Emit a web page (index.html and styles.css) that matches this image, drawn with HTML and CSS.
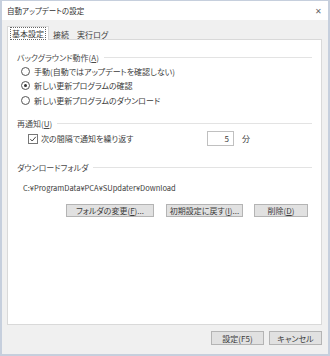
FILE: index.html
```html
<!DOCTYPE html>
<html lang="ja">
<head>
    <meta charset="UTF-8">
    <title>自動アップデートの設定</title>
    <link rel="stylesheet" href="styles.css">
</head>
<body>
<div class="window">
    <div class="titlebar">
        <span class="title">自動アップデートの設定</span>
        <span class="close">✕</span>
    </div>
    <div class="client">
        <div class="tabs">
            <span class="tab active"><span class="focus">基本設定</span></span>
            <span class="tab">接続</span>
            <span class="tab">実行ログ</span>
        </div>
        <div class="panel">
            <div class="group">
                <div class="legend"><span>バックグラウンド動作(<u>A</u>)</span></div>
                <label class="opt"><span class="radio"></span>手動(自動ではアップデートを確認しない)</label>
                <label class="opt"><span class="radio on"></span>新しい更新プログラムの確認</label>
                <label class="opt"><span class="radio"></span>新しい更新プログラムのダウンロード</label>
            </div>
            <div class="group g2">
                <div class="legend"><span>再通知(<u>U</u>)</span></div>
                <div class="row">
                    <span class="check">
                        <svg width="8" height="8" viewBox="0 0 8 8"><path d="M1.3 4.1 L3.2 6 L6.8 1.8" fill="none" stroke="#444" stroke-width="1"/></svg>
                    </span>
                    <span class="rowtext">次の間隔で通知を繰り返す</span>
                    <span class="num">5</span>
                    <span class="unit">分</span>
                </div>
            </div>
            <div class="group g3">
                <div class="legend"><span>ダウンロードフォルダ</span></div>
                <div class="path">C:¥ProgramData¥PCA¥SUpdater¥Download</div>
                <div class="btns">
                    <span class="btn b1">フォルダの変更(<u>F</u>)...</span>
                    <span class="btn b2">初期設定に戻す(<u>I</u>)...</span>
                    <span class="btn b3">削除(<u>D</u>)</span>
                </div>
            </div>
        </div>
        <div class="footer">
            <span class="btn fbtn">設定(F5)</span>
            <span class="btn fbtn">キャンセル</span>
        </div>
    </div>
</div>
</body>
</html>
```

FILE: styles.css
```css
html, body {
    margin: 0;
    padding: 0;
    background: #ffffff;
}

body {
    font-family: "Noto Sans CJK JP", "Noto Sans", sans-serif;
    font-size: 8px;
    font-feature-settings: "palt";
    color: #3c3c3c;
}

.window {
    width: 330px;
    height: 356px;
    box-sizing: border-box;
    border: 1px solid #c6cfdd;
    border-width: 1px 2px 2px 2px;
    display: flex;
    flex-direction: column;
}

.titlebar {
    height: 19px;
    background: #ffffff;
    display: flex;
    align-items: center;
    justify-content: space-between;
    padding: 0 6px 0 5px;
}

.title {
    font-size: 7.5px;
    color: #333;
}

.close {
    font-size: 8px;
    color: #666;
}

.client {
    flex: 1;
    background: #f0f0f0;
    padding: 0 6px 0 5px;
    display: flex;
    flex-direction: column;
}

.tabs {
    display: flex;
    align-items: flex-end;
    height: 20px;
    margin-bottom: -1px;
}

.tab {
    height: 11px;
    line-height: 11px;
    padding: 0 4px;
    white-space: nowrap;
}

.tab.active {
    height: 13px;
    line-height: 13px;
    background: #ffffff;
    border: 1px solid #d9d9d9;
    border-bottom: none;
    padding: 0 2px;
    position: relative;
    z-index: 1;
}

.focus {
    border: 1px dotted #666;
    padding: 0 1px;
}

.panel {
    height: 286px;
    box-sizing: border-box;
    background: #ffffff;
    border: 1px solid #d9d9d9;
    padding: 10px 9px 0 9px;
}

.legend {
    display: flex;
    align-items: center;
    height: 14px;
    color: #4a4a4a;
}

.legend::after {
    content: "";
    flex: 1;
    height: 1px;
    background: #e3e3e3;
    margin-left: 5px;
}

.opt {
    display: flex;
    align-items: center;
    height: 14.5px;
    padding-left: 4px;
}

.radio {
    width: 7px;
    height: 7px;
    border: 1px solid #555;
    border-radius: 50%;
    margin-right: 4px;
    position: relative;
    flex: none;
}

.radio.on::after {
    content: "";
    position: absolute;
    left: 2px;
    top: 2px;
    width: 3px;
    height: 3px;
    border-radius: 50%;
    background: #333;
}

.g2 {
    margin-top: 9px;
}

.row {
    display: flex;
    align-items: center;
    height: 16px;
    padding-left: 11px;
}

.check {
    width: 8px;
    height: 8px;
    border: 1px solid #777;
    display: flex;
    margin-right: 3px;
}

.num {
    margin-left: auto;
    width: 27px;
    height: 15px;
    box-sizing: border-box;
    border: 1px solid #c0c0c0;
    text-align: right;
    padding-right: 4px;
    line-height: 13px;
}

.unit {
    margin-left: 8px;
    margin-right: 62px;
}

.g3 {
    margin-top: 14px;
}

.path {
    height: 14px;
    line-height: 14px;
    margin-top: 6px;
    padding-left: 6px;
    font-size: 7.5px;
}

.btns {
    display: flex;
    justify-content: flex-end;
    gap: 12px;
    margin-top: 9px;
    padding-right: 4px;
}

.btn {
    height: 13px;
    box-sizing: border-box;
    border: 1px solid #b4b4b4;
    background: #e1e1e1;
    display: flex;
    align-items: center;
    justify-content: center;
    white-space: nowrap;
}

.b1 {
    width: 88px;
}

.b2 {
    width: 77px;
}

.b3 {
    width: 54px;
    margin-left: -1px;
}

.footer {
    display: flex;
    justify-content: flex-end;
    gap: 5px;
    margin-top: 6px;
}

.fbtn {
    width: 53px;
    height: 14px;
}
```
